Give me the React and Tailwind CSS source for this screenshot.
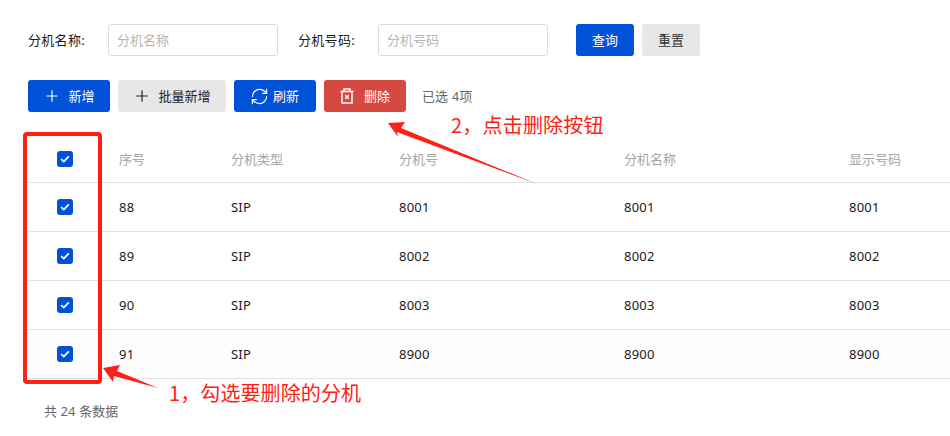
import { Plus, RefreshCw } from "lucide-react";

const rows = [
  { id: 88, num: "8001", bg: "" },
  { id: 89, num: "8002", bg: "" },
  { id: 90, num: "8003", bg: "" },
  { id: 91, num: "8900", bg: "bg-[#fdfdfd]" },
];

const Check = () => (
  <span className="w-4 h-4 rounded-[3px] bg-[#0052d9] flex items-center justify-center">
    <svg width="10" height="8" viewBox="0 0 10 8" fill="none">
      <path d="M1.2 4.2 L3.8 6.6 L8.8 1.4" stroke="white" strokeWidth="1.8" />
    </svg>
  </span>
);

const TrashIcon = () => (
  <svg width="14" height="16" viewBox="0 0 14 16" fill="none" stroke="white" strokeWidth="1.5">
    <path d="M0.5 3.5 H13.5" />
    <path d="M4 3.5 V1 H10 V3.5" />
    <path d="M2 3.5 V15 H12 V3.5" />
    <path d="M5.2 7.2 L8.8 10.8 M8.8 7.2 L5.2 10.8" />
  </svg>
);

const App = () => {
  return (
    <div className="relative w-[950px] h-[436px] overflow-hidden bg-white text-[13px] font-['Noto_Sans','Noto_Sans_CJK_SC',sans-serif] text-[#1a1a1a]">
      {/* Filter row */}
      <div className="flex items-center pt-6 pl-7">
        <label className="w-20 leading-8 whitespace-nowrap tracking-[0.3px]">分机名称:</label>
        <div className="w-[170px] h-8 border border-[#dcdcdc] rounded-[3px] pl-2 leading-[30px] text-[#b5b5b5]">分机名称</div>
        <label className="w-20 ml-5 leading-8 whitespace-nowrap tracking-[0.3px]">分机号码:</label>
        <div className="w-[170px] h-8 border border-[#dcdcdc] rounded-[3px] pl-2 leading-[30px] text-[#b5b5b5]">分机号码</div>
        <button className="ml-7 w-[58px] h-8 pt-px rounded-[3px] bg-[#0052d9] text-white">查询</button>
        <button className="ml-2 w-[58px] h-8 pt-px rounded-[3px] bg-[#e7e7e7] text-[#333]">重置</button>
      </div>

      {/* Toolbar */}
      <div className="flex items-center gap-2 mt-6 pl-7">
        <button className="w-[82px] h-8 rounded-[3px] bg-[#0052d9] text-white flex items-center justify-center gap-[7px]">
          <Plus size={18} strokeWidth={1.6} />
          <span className="pt-px">新增</span>
        </button>
        <button className="w-[108px] h-8 rounded-[3px] bg-[#e7e7e7] text-[#222] flex items-center justify-center gap-[7px]">
          <Plus size={18} strokeWidth={1.6} />
          <span className="pt-px">批量新增</span>
        </button>
        <button className="w-[82px] h-8 rounded-[3px] bg-[#0052d9] text-white flex items-center justify-center gap-[4px] pr-px">
          <RefreshCw size={19} strokeWidth={1.5} />
          <span className="pt-px">刷新</span>
        </button>
        <button className="w-[82px] h-8 rounded-[3px] bg-[#d54941] text-white flex items-center justify-center gap-[10px]">
          <TrashIcon />
          <span className="pt-px">删除</span>
        </button>
        <span className="ml-2 pt-px text-[#666] tracking-[0.1px]">已选 4项</span>
      </div>

      {/* Table */}
      <div className="mt-[22px] ml-7">
        <div className="grid grid-cols-[75px_112px_168px_225px_225px_1fr] h-[49px] items-center border-b border-[#e2e2e2] text-[#a6a6a6]">
          <div className="flex justify-center pr-[1px] pt-[2px]"><Check /></div>
          <div className="pl-4 pt-[3px]">序号</div>
          <div className="pl-4 pt-[3px]">分机类型</div>
          <div className="pl-4 pt-[3px]">分机号</div>
          <div className="pl-4 pt-[3px]">分机名称</div>
          <div className="pl-4 pt-[3px]">显示号码</div>
        </div>
        {rows.map((row) => (
          <div
            key={row.id}
            className={`grid grid-cols-[75px_112px_168px_225px_225px_1fr] h-[49px] items-center border-b border-[#e2e2e2] tracking-[0.2px] ${row.bg}`}>
            <div className="flex justify-center pr-[1px]"><Check /></div>
            <div className="pl-4 pt-px">{row.id}</div>
            <div className="pl-4 pt-px">SIP</div>
            <div className="pl-4 pt-px">{row.num}</div>
            <div className="pl-4 pt-px">{row.num}</div>
            <div className="pl-4 pt-px">{row.num}</div>
          </div>
        ))}
      </div>

      <div className="mt-[22px] ml-11 text-[#666] leading-[20px] tracking-[0.1px]">共 24 条数据</div>

      {/* Annotations drawn over the page */}
      <div className="absolute left-[23px] top-[132px] w-[79px] h-[252px] border-[4px] border-[#ff2015] rounded-[4px]" />
      <svg className="absolute left-0 top-0" width="950" height="436" viewBox="0 0 950 436" fill="#ff2015">
        <path d="M388 123 L405 122 L401 128 L537 184 L397 132 L398 137 Z" />
        <path d="M103 368 L120 365 L117 371 L158 388 L114 376 L113 382 Z" />
      </svg>
      <div className="absolute left-[451px] top-[110px] text-[20px] leading-[30px] tracking-[0.2px] text-[#ff2015] font-['Noto_Sans_CJK_SC',sans-serif] whitespace-nowrap">2，点击删除按钮</div>
      <div className="absolute left-[169px] top-[378px] text-[20px] leading-[30px] tracking-[0.1px] text-[#ff2015] font-['Noto_Sans_CJK_SC',sans-serif] whitespace-nowrap">1，勾选要删除的分机</div>
    </div>
  );
};

export default App;
